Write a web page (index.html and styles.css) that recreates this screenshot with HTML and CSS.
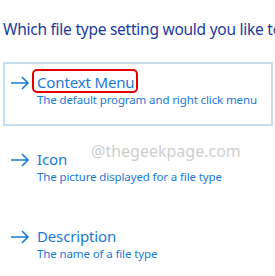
FILE: index.html
```html
<!DOCTYPE html>
<html>
<head>
<meta charset="utf-8">
<link rel="stylesheet" href="styles.css">
</head>
<body>
<div class="page">
  <h1 class="title">Which file type setting would you like to change?</h1>
  <div class="options">
    <div class="option selected">
      <svg class="arrow" width="20" height="14" viewBox="0 0 20 14"><path d="M1 7H18M12 1L18 7L12 13" fill="none" stroke="#1a7ad6" stroke-width="1.6"/></svg>
      <div class="text">
        <div class="name"><span class="highlight">Context Menu</span></div>
        <div class="desc">The default program and right click menu</div>
      </div>
    </div>
    <div class="option">
      <svg class="arrow" width="20" height="14" viewBox="0 0 20 14"><path d="M1 7H18M12 1L18 7L12 13" fill="none" stroke="#1a7ad6" stroke-width="1.6"/></svg>
      <div class="text">
        <div class="name">Icon</div>
        <div class="desc">The picture displayed for a file type</div>
      </div>
      <div class="watermark">@thegeekpage.com</div>
    </div>
    <div class="option">
      <svg class="arrow" width="20" height="14" viewBox="0 0 20 14"><path d="M1 7H18M12 1L18 7L12 13" fill="none" stroke="#1a7ad6" stroke-width="1.6"/></svg>
      <div class="text">
        <div class="name">Description</div>
        <div class="desc">The name of a file type</div>
      </div>
    </div>
  </div>
</div>
</body>
</html>
```
FILE: styles.css
```css
html, body {
  margin: 0;
  padding: 0;
  background: #ffffff;
  overflow: hidden;
}
body {
  font-family: "Noto Sans", "Open Sans", sans-serif;
}
.page {
  width: 275px;
  height: 276px;
  overflow: hidden;
}
.title {
  margin: 0;
  padding: 19px 0 0 3px;
  height: 62px;
  box-sizing: border-box;
  font-size: 15.5px;
  font-weight: normal;
  line-height: 20px;
  letter-spacing: -0.25px;
  color: #1c3a9e;
  white-space: nowrap;
  overflow: hidden;
}
.options {
  display: flex;
  flex-direction: column;
  gap: 13px;
}
.option {
  position: relative;
  display: flex;
  align-items: flex-start;
  margin-left: 3px;
  width: 270px;
  height: 64px;
  box-sizing: border-box;
  border: 2px solid transparent;
  padding: 8px 0 0 5px;
}
.option.selected {
  border-color: #c7def2;
}
.arrow {
  margin-top: 4px;
  margin-right: 7px;
  flex: none;
}
.text {
  display: flex;
  flex-direction: column;
}
.name {
  font-size: 15px;
  line-height: 20px;
  letter-spacing: -0.15px;
  color: #1a7ad6;
  white-space: nowrap;
}
.highlight {
  position: relative;
}
.highlight::after {
  content: "";
  position: absolute;
  left: -5px;
  right: -4px;
  top: -3px;
  bottom: -1px;
  border: 2.5px solid #e40000;
  border-radius: 5px;
}
.desc {
  font-size: 11.5px;
  line-height: 15px;
  letter-spacing: -0.12px;
  color: #1a7ad6;
  white-space: nowrap;
}
.watermark {
  position: absolute;
  left: 86px;
  top: -1px;
  font-size: 16px;
  color: #cfcfcf;
  white-space: nowrap;
}
```
